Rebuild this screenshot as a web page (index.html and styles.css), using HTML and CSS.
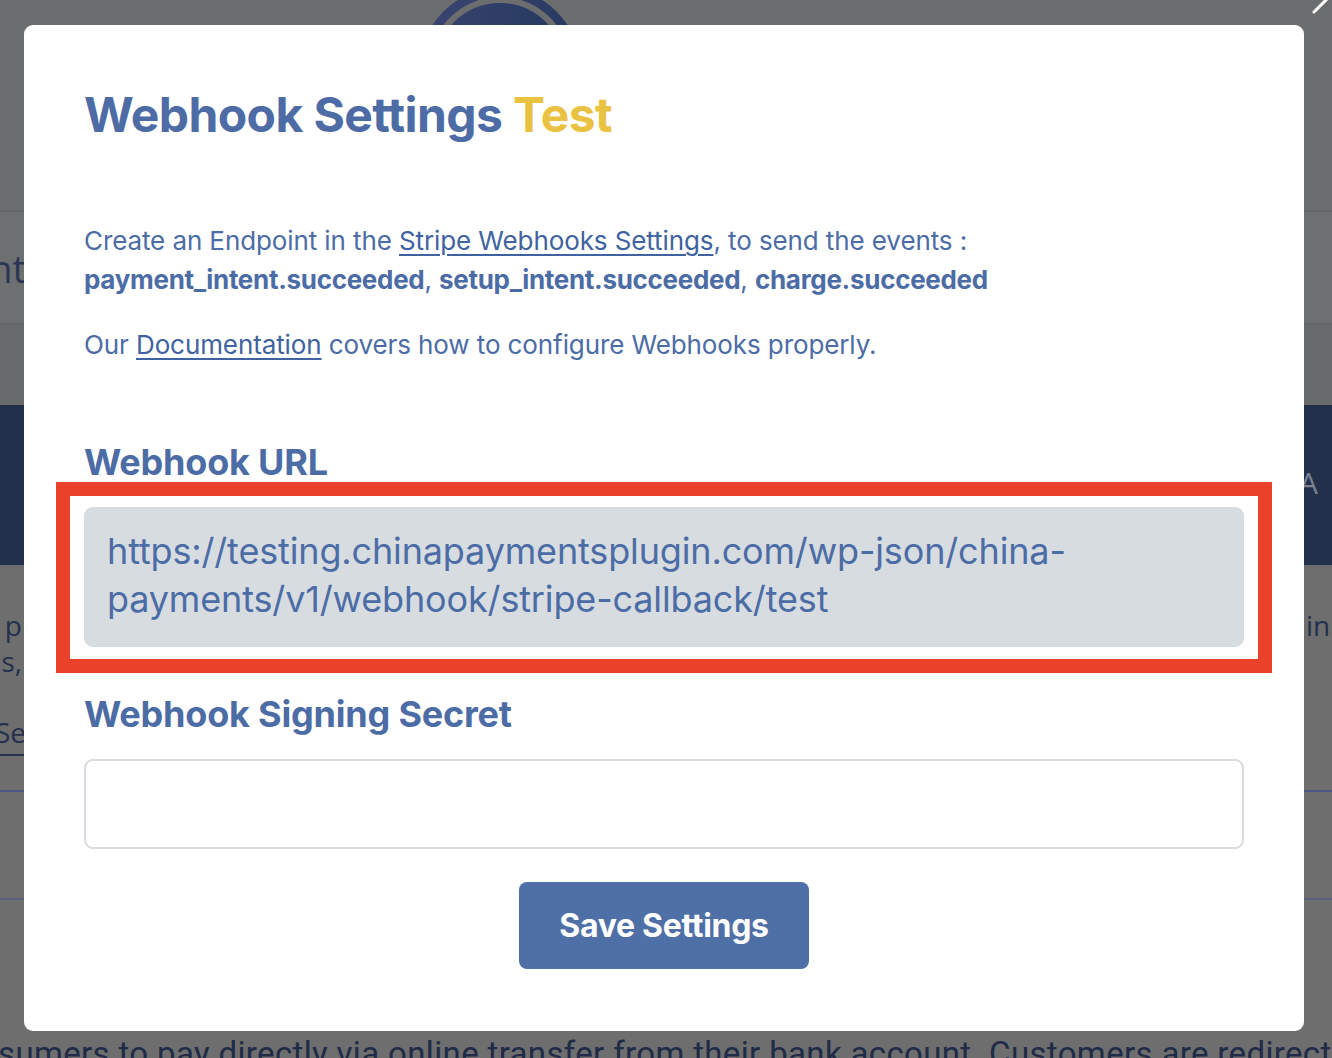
FILE: index.html
```html
<!DOCTYPE html>
<html lang="en">
<head>
<meta charset="utf-8">
<title>Webhook Settings</title>
<link rel="stylesheet" href="styles.css">
</head>
<body>
<div class="page">
  <header class="hdr">
    <div class="logo"><div class="logo-inner"></div></div>
    <svg class="close" width="30" height="20" viewBox="0 0 30 20"><line x1="12" y1="12" x2="26" y2="-2" stroke="#fff" stroke-width="3" stroke-linecap="round"/></svg>
  </header>
  <div class="band1"><div class="edge-left"><span class="band1-title">Payment</span></div></div>
  <div class="band2"></div>
  <div class="navy"><span class="navy-right">A</span></div>
  <div class="content">
    <div class="cols">
      <div class="edge-left left-text">
        <span>Stripe p</span>
        <span>methods,</span>
      </div>
      <p class="right-text">in</p>
    </div>
    <div class="edge-left link-wrap"><a class="left-link">Settings Se</a></div>
    <div class="rule rule-a"></div>
    <div class="rule rule-b"></div>
    <p class="bottom-text">sumers to pay directly via online transfer from their bank account. Customers are redirected</p>
  </div>
</div>

<div class="modal">
  <h1 class="modal-title">Webhook Settings <span class="test">Test</span></h1>
  <p class="intro">Create an Endpoint in the <a class="lnk">Stripe Webhooks Settings</a>, to send the events :<br><b>payment_intent.succeeded</b>, <b>setup_intent.succeeded</b>, <b>charge.succeeded</b></p>
  <p class="intro second">Our <a class="lnk">Documentation</a> covers how to configure Webhooks properly.</p>
  <h2 class="field-label">Webhook URL</h2>
  <div class="url-box">https://testing.chinapaymentsplugin.com/wp-json/china-<br>payments/v1/webhook/stripe-callback/test</div>
  <h2 class="field-label label2">Webhook Signing Secret</h2>
  <div class="secret-input"></div>
  <div class="actions"><button class="save">Save Settings</button></div>
</div>
</body>
</html>
```
FILE: styles.css
```css
* { box-sizing: border-box; }
html, body { margin: 0; padding: 0; }
body {
  width: 1332px;
  height: 1058px;
  overflow: hidden;
  position: relative;
  background: #6d6d6e;
  font-family: Inter, "Noto Sans", sans-serif;
}

/* background page (already dimmed) */
.page { width: 1332px; }
.hdr {
  height: 210px;
  background: #6c6d6f;
  position: relative;
  overflow: hidden;
}
.logo {
  position: absolute;
  left: 420px;
  top: -12px;
  width: 160px;
  height: 160px;
  border-radius: 50%;
  background: linear-gradient(90deg, #3a4571, #283a61);
  padding: 9px;
}
.logo-inner {
  width: 100%;
  height: 100%;
  border-radius: 50%;
  border: 6px solid #6c6d6f;
  background: linear-gradient(90deg, #36426d, #273a61);
}
.close { position: absolute; right: 0; top: 0; }

/* a column whose content overflows to the left edge of the window */
.edge-left {
  display: flex;
  flex-direction: column;
  align-items: flex-end;
  white-space: nowrap;
}
.band1 {
  height: 115px;
  background: #6e6f70;
  border-top: 2px solid #646566;
  border-bottom: 2px solid #646566;
  display: flex;
  align-items: center;
}
.band1 .edge-left { width: 26px; }
.band1-title {
  font-family: "Open Sans", sans-serif;
  font-size: 38px;
  color: #2b3654;
}
.band2 { height: 80px; background: #686a6c; }
.navy {
  height: 160px;
  background: #22304c;
  display: flex;
  justify-content: flex-end;
  align-items: center;
  overflow: hidden;
}
.navy-right {
  font-family: "Open Sans", sans-serif;
  font-size: 30px;
  color: #7b8190;
  margin-right: 14px;
  margin-top: -6px;
}
.content { background: #6e6e6e; height: 493px; position: relative; overflow: hidden; }
.cols { display: flex; justify-content: space-between; padding-top: 42px; }
.left-text {
  width: 22px;
  font-family: "Open Sans", sans-serif;
  font-size: 28px;
  line-height: 36px;
  color: #24304d;
}
.right-text {
  margin: 0 -26px 0 0;
  width: 52px;
  font-family: "Open Sans", sans-serif;
  font-size: 28px;
  line-height: 36px;
  color: #24304d;
}
.link-wrap { width: 26px; margin-top: 31px; overflow: hidden; }
.left-link {
  display: block;
  font-family: "Open Sans", sans-serif;
  font-size: 28px;
  line-height: 44px;
  color: #24304d;
  border-bottom: 2px solid #2a3452;
}
.rule { height: 2px; background: #4e5587; }
.rule-a { margin-top: 34px; }
.rule-b { margin-top: 106px; background: #5b6083; }
.bottom-text {
  margin: 134px 0 0 -2px;
  white-space: nowrap;
  font-family: Roboto, sans-serif;
  font-size: 33px;
  letter-spacing: 0.35px;
  color: #1f2b47;
  line-height: 40px;
}

/* modal */
.modal {
  position: absolute;
  left: 24px;
  top: 25px;
  width: 1280px;
  height: 1006px;
  background: #fff;
  border-radius: 9px;
  padding: 60px 60px 0 60px;
  color: #4c6ca6;
}
.modal-title {
  margin: 0;
  font-size: 48px;
  line-height: 60px;
  font-weight: 700;
  letter-spacing: -0.6px;
  color: #4d6ca6;
}
.test { color: #e9c242; }
.intro {
  margin: 76px 0 0 0;
  font-size: 26px;
  line-height: 39px;
  letter-spacing: -0.1px;
}
.intro b { font-weight: 700; letter-spacing: -0.3px; }
.intro.second { margin-top: 26px; }
.lnk { color: #3f63a1; text-decoration: underline; text-underline-offset: 4px; text-decoration-thickness: 2px; }
.field-label {
  margin: 76px 0 0 0;
  font-size: 36px;
  line-height: 44px;
  font-weight: 700;
  letter-spacing: -0.2px;
}
.label2 { margin-top: 45px; }
.url-box {
  position: relative;
  margin-top: 23px;
  height: 140px;
  background: #d7dce1;
  border-radius: 9px;
  padding: 20px 22px 0 23px;
  font-size: 36px;
  line-height: 48px;
  letter-spacing: -0.15px;
  color: #4c6ca6;
}
/* red highlight frame drawn over the field */
.url-box::after {
  content: "";
  position: absolute;
  top: -25px;
  bottom: -26px;
  left: -28px;
  right: -28px;
  border: 14px solid #e9412a;
  pointer-events: none;
}
.secret-input {
  margin-top: 23px;
  height: 90px;
  border: 2px solid #d7dbe0;
  border-radius: 9px;
}
.actions { display: flex; justify-content: center; margin-top: 33px; }
.save {
  width: 290px;
  height: 87px;
  border: 0;
  border-radius: 8px;
  background: #4f6fa7;
  color: #fff;
  font-family: Inter, sans-serif;
  font-size: 32px;
  font-weight: 700;
  letter-spacing: -0.3px;
}
```
